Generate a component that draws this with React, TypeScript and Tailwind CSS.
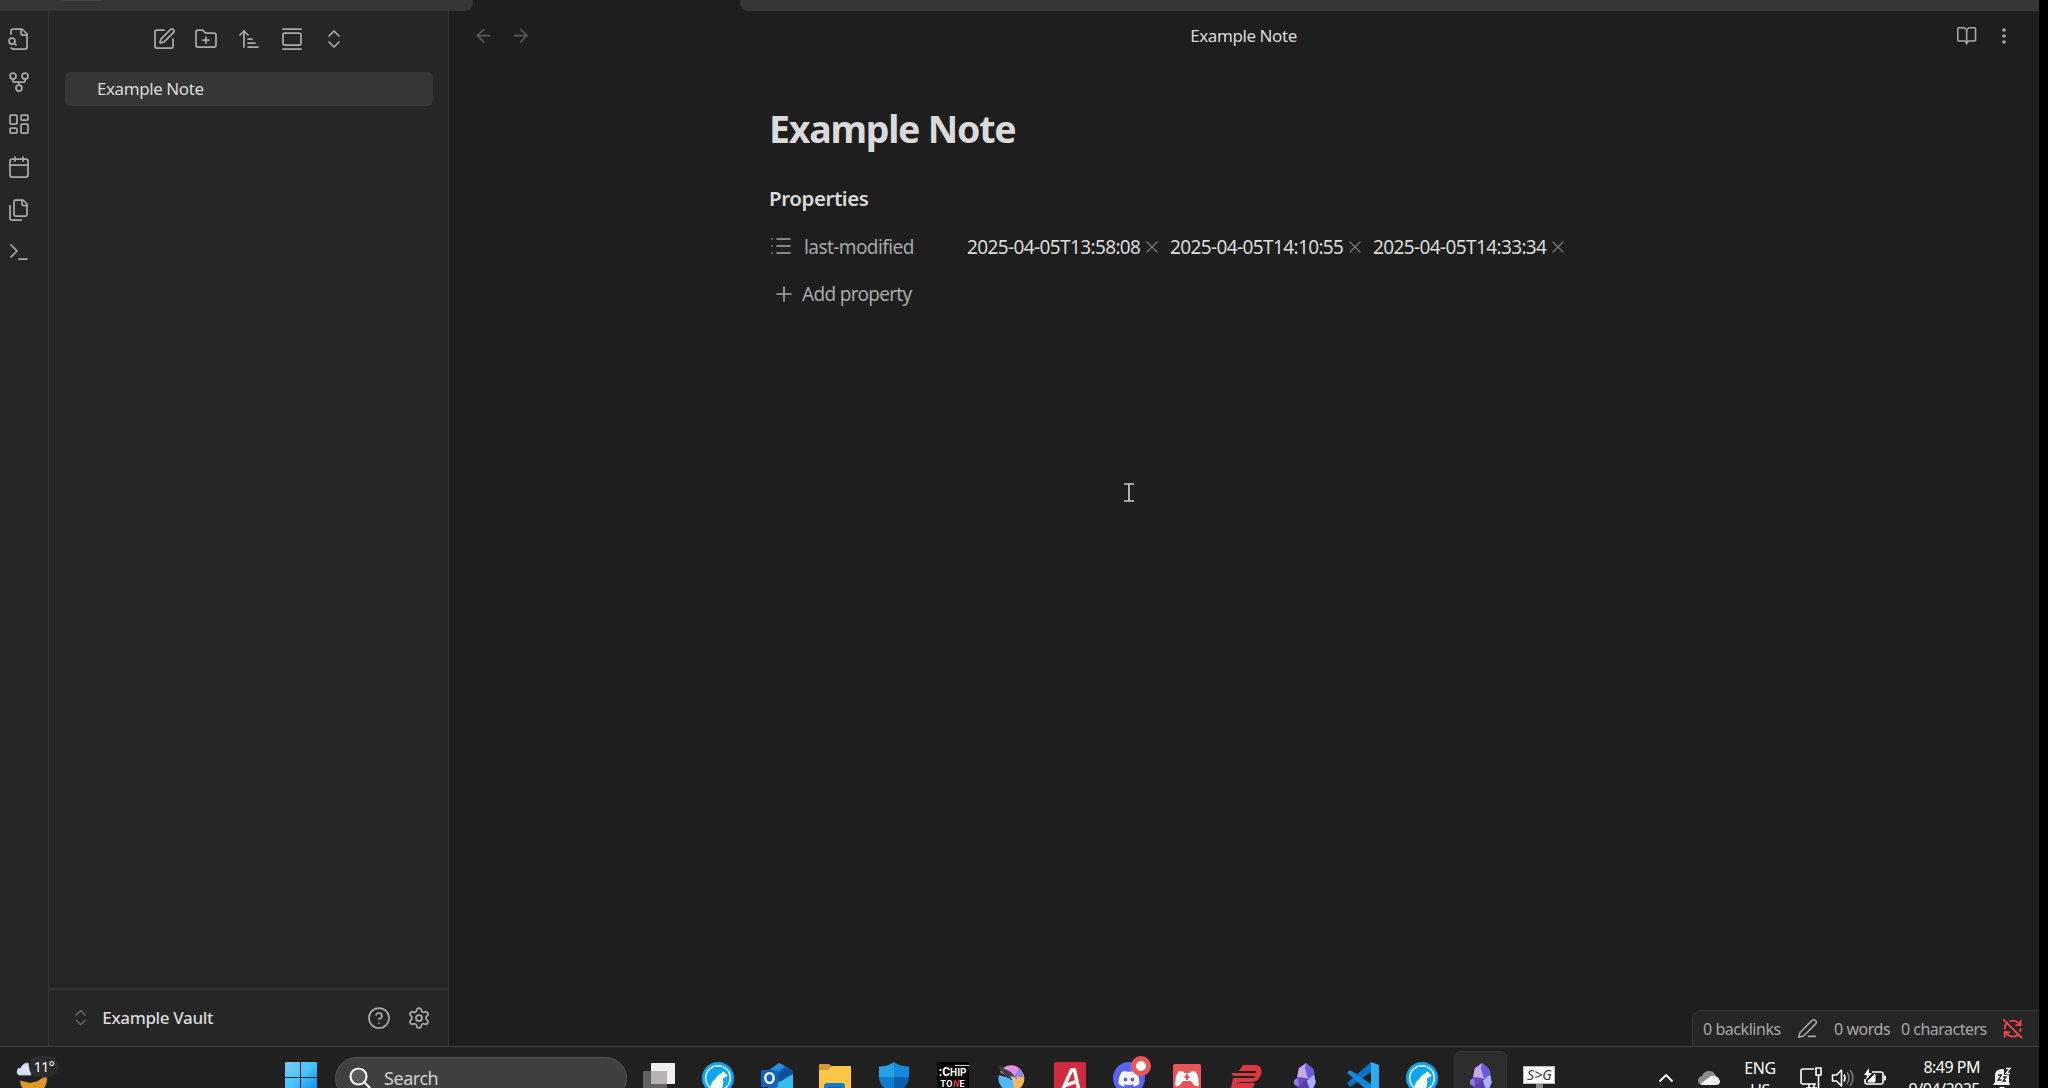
import React from "react";
import {
  ArrowLeft,
  ArrowRight,
  ArrowUpNarrowWide,
  BookOpen,
  Calendar,
  ChevronsUpDown,
  CircleHelp,
  FolderPlus,
  GalleryVertical,
  GitFork,
  LayoutDashboard,
  List,
  Plus,
  RefreshCwOff,
  Settings,
  SquarePen,
  Terminal,
  X,
} from "lucide-react";

function Stroke({ size = 24, children }: { size?: number; children: React.ReactNode }) {
  return (
    <svg width={size} height={size} viewBox="0 0 24 24" fill="none" stroke="currentColor" strokeWidth={1.75} strokeLinecap="round" strokeLinejoin="round">
      {children}
    </svg>
  );
}

function FileSearchIcon() {
  return (
    <Stroke>
      <path d="M14 2v4a2 2 0 0 0 2 2h4" />
      <path d="M4.268 21a2 2 0 0 0 1.727 1H18a2 2 0 0 0 2-2V7l-5-5H6a2 2 0 0 0-2 2v3" />
      <path d="m9 18-1.5-1.5" />
      <circle cx="5" cy="14" r="3" />
    </Stroke>
  );
}

function FilesIcon() {
  return (
    <Stroke>
      <path d="M15 2v4a1.500 1.500 0 0 0 1.500 1.500H20" />
      <path d="M8.500 18A1.500 1.500 0 0 1 7 16.500v-13A1.500 1.500 0 0 1 8.500 2H16l4 4v10.500a1.500 1.500 0 0 1-1.500 1.500Z" />
      <path d="M3 7.600v12.800A1.600 1.600 0 0 0 4.600 22h9.800" />
    </Stroke>
  );
}

function EditLineIcon() {
  return (
    <Stroke size={21}>
      <path d="M13 21h8" />
      <path d="M17 3a2.850 2.830 0 1 1 4 4L7.500 20.500 2 22l1.500-5.500Z" />
    </Stroke>
  );
}

const ribbon = [
  <FileSearchIcon />,
  <GitFork size={24} strokeWidth={1.75} />,
  <LayoutDashboard size={24} strokeWidth={1.75} />,
  <Calendar size={24} strokeWidth={1.75} />,
  <FilesIcon />,
  <Terminal size={24} strokeWidth={1.75} />,
];

function TopStrip() {
  return (
    <div className="flex h-[11px] shrink-0 justify-between bg-[#1e1e1e]">
      <div className="w-[473px] rounded-br-lg bg-[#363636]">
        <div className="ml-[63px] h-px w-[39px] bg-[#444]" />
      </div>
      <div className="w-[1299px] rounded-bl-lg bg-[#363636]" />
    </div>
  );
}

function Sidebar() {
  return (
    <aside className="flex w-[400px] shrink-0 flex-col border-r border-[#363636] bg-[#262626]">
      <div className="flex h-[61px] items-center justify-center gap-[18.7px] pb-[6px] pl-px text-[#a8a8a8]">
        <SquarePen size={24} strokeWidth={1.75} />
        <FolderPlus size={24} strokeWidth={1.75} />
        <ArrowUpNarrowWide size={24} strokeWidth={1.75} />
        <GalleryVertical size={24} strokeWidth={1.75} />
        <ChevronsUpDown size={24} strokeWidth={1.75} />
      </div>
      <div className="ml-4 flex h-[34px] w-[368px] items-center rounded-[5px] bg-[#363636] pl-8 text-[17px] tracking-[-0.42px] text-[#dadada]">
        Example Note
      </div>
      <div className="mt-auto flex h-[58px] items-center border-t-2 border-[#333] pl-[21px] pr-[17px]">
        <ChevronsUpDown size={21.3} strokeWidth={1.75} className="text-[#666]" />
        <span className="ml-[11px] text-[17px] font-medium tracking-[-0.35px] text-[#dadada]">Example Vault</span>
        <CircleHelp size={24} strokeWidth={1.75} className="ml-auto text-[#a8a8a8]" />
        <Settings size={24} strokeWidth={1.75} className="ml-4 text-[#a8a8a8]" />
      </div>
    </aside>
  );
}

const stamps = ["2025-04-05T13:58:08", "2025-04-05T14:10:55", "2025-04-05T14:33:34"];

function Note() {
  return (
    <main className="relative flex min-w-0 flex-1 flex-col bg-[#1e1e1e]">
      <header className="flex h-[49px] items-center justify-between pl-[24px] pr-[25px]">
        <div className="flex w-[120px] gap-4 text-[#5a5a5a]">
          <ArrowLeft size={21.3} strokeWidth={1.75} />
          <ArrowRight size={21.3} strokeWidth={1.75} />
        </div>
        <span className="text-[17px] tracking-[-0.42px] text-[#dadada]">Example Note</span>
        <div className="flex w-[120px] items-center justify-end gap-[17px] text-[#a8a8a8]">
          <BookOpen size={21.3} strokeWidth={1.75} />
          <svg width="20" height="22" viewBox="0 0 20 22" fill="currentColor">
            <circle cx="10" cy="5" r="1.800" />
            <circle cx="10" cy="11" r="1.800" />
            <circle cx="10" cy="17" r="1.800" />
          </svg>
        </div>
      </header>
      <section className="ml-[320px] flex flex-col items-start">
        <h1 className="mt-[43px] text-[37.500px] font-bold leading-[52px] tracking-[-1.250px] text-[#dadada]">Example Note</h1>
        <h2 className="mt-[28px] text-[20.500px] font-semibold leading-[30px] tracking-[-0.420px] text-[#dadada]">Properties</h2>
        <div className="mt-[19px] flex h-[30px] items-center">
          <List size={24} strokeWidth={1.6} className="relative -top-px text-[#a8a8a8]" />
          <span className="ml-[11px] w-[163px] text-[19px] tracking-[-0.580px] text-[#a8a8a8]">last-modified</span>
          {stamps.map((s) => (
            <span key={s} className="flex w-[203px] items-center gap-[2px] text-[19px] tracking-[-0.620px] text-[#dadada]">
              {s}
              <X size={20} strokeWidth={1.500} className="text-[#777]" />
            </span>
          ))}
        </div>
        <div className="mt-[17px] flex h-[30px] items-center gap-[6px] pl-[3px] text-[#a8a8a8]">
          <Plus size={24} strokeWidth={1.6} />
          <span className="text-[19px] tracking-[-0.700px]">Add property</span>
        </div>
      </section>
      <svg className="absolute left-[674px] top-[471px]" width="12" height="21" viewBox="0 0 12 21" fill="none" stroke="#ccc" strokeWidth="1.700">
        <path d="M1 2H11M1 19H11M6 2V19" />
      </svg>
      <footer className="mt-auto flex h-[36px] w-[347px] items-center self-end rounded-tl-[10px] border-l border-t border-[#363636] bg-[#262626] pl-[10px] text-[16px] tracking-[-0.450px] text-[#a8a8a8]">
        <span className="w-[94px]">0 backlinks</span>
        <EditLineIcon />
        <span className="ml-[16px] w-[67px]">0 words</span>
        <span className="w-[101px] tracking-[-0.520px]">0 characters</span>
        <RefreshCwOff size={21.3} strokeWidth={2} className="text-[#fb464c]" />
      </footer>
    </main>
  );
}

function WindowsIcon() {
  return (
    <svg width="32" height="32" viewBox="0 0 32 32">
      <defs>
        <linearGradient id="win" x1="0" y1="0" x2="1" y2="1">
          <stop offset="0" stopColor="#7fc4f0" />
          <stop offset=".45" stopColor="#45c8fa" />
          <stop offset="1" stopColor="#0a84e8" />
        </linearGradient>
      </defs>
      <path fill="url(#win)" d="M1 0h14v15H0V1zM16 0h15l1 1v14H16zM0 16h15v16H1l-1-1zM16 16h16v15l-1 1H16z" />
    </svg>
  );
}

function TaskViewIcon() {
  return (
    <svg width="32" height="32" viewBox="0 0 32 32">
      <rect x="8" y="1" width="24" height="21" rx="1" fill="#f0f0f2" />
      <rect x="0" y="9" width="24" height="22" rx="1" fill="#777" fillOpacity=".75" />
      <path d="M8 9H24V22H8Z" fill="#b5b4b2" />
    </svg>
  );
}

function WolfIcon() {
  return (
    <svg width="32" height="32" viewBox="0 0 32 32">
      <circle cx="16" cy="16" r="16" fill="#0ba4fb" />
      <circle cx="16" cy="16" r="12.300" fill="none" stroke="#fff" strokeWidth="1.500" />
      <path d="M8.500 26c0-4 2-7 5-9.500 1-2.500 3-4 5.500-5l2.500-2.500 1.500 2 2.500 2-1 2-3.500 1 .5 5-1.500 5.500-4 2z" fill="#fff" />
    </svg>
  );
}

function OutlookIcon() {
  return (
    <svg width="34" height="34" viewBox="0 0 34 34">
      <path d="M8 10 19 2 33 10V30H8Z" fill="#1470c4" />
      <path d="M8 10 19 2l6 3L12 15Z" fill="#1f8fe0" />
      <path d="M16 14 27 6l6 4v5L20 22Z" fill="#0f4f99" />
      <path d="M18 22 33 13V30H16Z" fill="#35bdf2" />
      <rect x="1" y="9" width="17" height="17" rx="1.500" fill="#0f62bd" />
      <ellipse cx="9.500" cy="17" rx="4.200" ry="4.900" fill="none" stroke="#fff" strokeWidth="2.400" />
    </svg>
  );
}

function FolderIcon() {
  return (
    <svg width="32" height="32" viewBox="0 0 32 32">
      <path d="M0 3q0-1 1-1h9l3 3v6H0z" fill="#d9952a" />
      <path d="M0 8h9l4-4h18q1 0 1 1v26H0z" fill="#fcc747" />
      <path d="M5 31V24q0-3 3-3h15q3 0 3 3v7z" fill="#1478c8" />
      <path d="M9 31v-6h14v6z" fill="#0d5ea8" />
    </svg>
  );
}

function ShieldIcon() {
  return (
    <svg width="32" height="32" viewBox="0 0 32 32">
      <path d="M16 0C12 3 7 4.500 1 4.500V15h15z" fill="#28a0e8" />
      <path d="M16 0c4 3 9 4.500 15 4.500V15H16z" fill="#1488da" />
      <path d="M1 15h15v17C7 28 1 23 1 15z" fill="#0f7bcf" />
      <path d="M31 15H16v17c9-4 15-9 15-17z" fill="#0a5fae" />
    </svg>
  );
}

function ChipToneIcon() {
  return (
    <div className="flex h-8 w-8 flex-col items-center bg-black font-[Roboto] font-bold text-white">
      <div className="mt-[3px] h-px w-[14px] self-end bg-[#ccc]" />
      <div className="h-[13px] whitespace-nowrap text-[10px] leading-[13px]">
        <span className="text-[12px]">:C</span>HIP
      </div>
      <div className="h-[10px] text-[9px] leading-[10px] tracking-[0.5px]">
        TO<span className="italic text-[#e23a3a]">N</span>E
      </div>
    </div>
  );
}

function KritaIcon() {
  return (
    <svg width="32" height="32" viewBox="0 0 32 32">
      <path d="M5 10A12.500 12.500 0 0 1 28 12L17 17Z" fill="#e88be8" />
      <path d="M28 11A12.500 12.500 0 0 1 19 29L16 16Z" fill="#f6b653" />
      <path d="M24 6A12.500 12.500 0 0 1 28.500 15L19 15Z" fill="#8f86e8" />
      <path d="M4 13A13 13 0 0 0 20 29L17 17Z" fill="#4fb9f5" />
      <path d="m2 3 14 7 6 7-6 1L7 10Z" fill="#3e3e42" />
      <path d="m15 14 5 1 3 5-5-1Z" fill="#bdbdc2" />
    </svg>
  );
}

function LetterAIcon() {
  return (
    <svg width="32" height="32" viewBox="0 0 32 32">
      <rect width="32" height="32" rx="2" fill="#cf2c3f" />
      <path d="M8 29 17.500 8h3L25 29M11 23.500 24 19" fill="none" stroke="#f5f5f5" strokeWidth="3.600" />
    </svg>
  );
}

function DiscordIcon() {
  return (
    <div className="relative h-8 w-8">
      <svg width="32" height="32" viewBox="0 0 32 32">
        <circle cx="16" cy="16" r="16" fill="#5865f2" />
        <path
          transform="translate(5.500 8) scale(.87)"
          fill="#fff"
          d="M20.300 2.400A20 20 0 0 0 15.400.9l-.6 1.200a18 18 0 0 0-5.500 0L8.700.9a20 20 0 0 0-4.900 1.500C.7 7.100-.2 11.600.2 16.100a20 20 0 0 0 6 3l1.300-2-2-1 .5-.4a14 14 0 0 0 12.100 0l.5.4-2 1 1.300 2a20 20 0 0 0 6-3c.5-5.200-.8-9.700-3.600-13.700zM8 13.300c-1.200 0-2.200-1.100-2.200-2.400s1-2.400 2.200-2.400 2.200 1.100 2.200 2.400-1 2.400-2.200 2.400zm8 0c-1.200 0-2.200-1.100-2.200-2.400s1-2.400 2.200-2.400 2.200 1.100 2.200 2.400-1 2.400-2.200 2.400z"
        />
      </svg>
      <span className="absolute -right-[6px] -top-[6px] h-5 w-5 rounded-full border-[5px] border-[#ee5555] bg-white" />
    </div>
  );
}

function GamepadIcon() {
  return (
    <svg width="28" height="28" viewBox="0 0 28 28">
      <rect width="28" height="28" rx="1.500" fill="#ea5459" />
      <path d="M6 7h4l1 2h6l1-2h4l3 5 1 10q-3 1-5-1l-3-4h-8l-3 4q-2 2-5 1l1-10z" fill="#fff" />
      <path d="M14 10v6M11.500 13h5" stroke="#ea5459" strokeWidth="2.200" />
    </svg>
  );
}

function VpnIcon() {
  return (
    <svg width="32" height="32" viewBox="0 0 32 32">
      <path d="M13 3H25C30 3 33 7 31 12 30 17 26 20 21 20H8l-1 6H1l2-10H23q2 0 2-2H5q-4 0-3-3H25q2 0 1-2H9Z" fill="#d93742" />
      <path d="M8 21h17q-2 6-6 8H6Z" fill="#d93742" />
    </svg>
  );
}

function CrystalIcon() {
  return (
    <svg width="32" height="32" viewBox="0 0 32 32">
      <path d="m17 1 7 6 2 9-8 1-10-2 2-9z" fill="#b9a3f0" />
      <path d="m17 1-1 5 3 11 6-4-1-6z" fill="#6a5be0" />
      <path d="m10 6 6 1 2 9-10 2z" fill="#c9a8ec" />
      <path d="m8 15 9 1 4 14-4 1L5 23z" fill="#6a4bc4" />
      <path d="m5 18 4-2 1 8-5-2z" fill="#8d7ae8" />
      <path d="m18 18 7-4 2 6-4 9-4-3z" fill="#a9b0fb" />
      <path d="m17 18 4 9 1 3-5 1-8-6z" fill="#5a3ea8" />
    </svg>
  );
}

function CodeIcon() {
  return (
    <svg width="32" height="32" viewBox="0 0 32 32">
      <path d="M0 21 24 0v10L3 25z" fill="#0a72c4" />
      <path d="M0 10.500 3 8l21 14v10z" fill="#1189dc" />
      <path d="m24 0 8 3v26l-8 3z" fill="#2aabf4" />
    </svg>
  );
}

function SignIcon() {
  return (
    <div className="flex h-[24px] w-8 flex-col items-center">
      <div className="flex h-[18px] w-8 shrink-0 items-center justify-center border border-[#bbb] bg-white font-['Open_Sans'] text-[14px] italic leading-none text-[#333]">
        S&gt;G
      </div>
      <div className="h-4 w-[7px] shrink-0 bg-[#8a8a85]" />
    </div>
  );
}

const apps: { icon: React.ReactNode; active?: boolean }[] = [
  { icon: <TaskViewIcon /> },
  { icon: <WolfIcon /> },
  { icon: <OutlookIcon /> },
  { icon: <FolderIcon /> },
  { icon: <ShieldIcon /> },
  { icon: <ChipToneIcon /> },
  { icon: <KritaIcon /> },
  { icon: <LetterAIcon /> },
  { icon: <DiscordIcon /> },
  { icon: <GamepadIcon /> },
  { icon: <VpnIcon /> },
  { icon: <CrystalIcon /> },
  { icon: <CodeIcon /> },
  { icon: <WolfIcon /> },
  { icon: <CrystalIcon />, active: true },
  { icon: <SignIcon /> },
];

function Weather() {
  return (
    <div className="relative flex h-[44px] w-[50px]">
      <svg width="50" height="44" viewBox="0 0 50 44">
        <path d="M4 24.500 14 27 22 25 27 21.500H31Q31 36 17.500 37 5 36 4 24.500z" fill="#dc9a25" />
        <path d="M1 16q0-4 4-4 2-5 7-5l3 12H3q-2-1-2-3z" fill="#dfe3f5" stroke="#a9b6ee" strokeWidth="1" />
      </svg>
      <span className="absolute left-[13px] top-0 flex h-[21px] w-[30px] items-center justify-center rounded-full bg-[#2c2c2c] text-[14px] tracking-[-0.500px] text-white">
        11°
      </span>
    </div>
  );
}

function Tray() {
  return (
    <div className="flex h-full items-center text-white">
      <svg width="16" height="10" viewBox="0 0 16 10" fill="none" stroke="#fff" strokeWidth="1.800">
        <path d="m1.500 8.500 6.500-6.500 6.500 6.500" />
      </svg>
      <svg className="ml-[23px]" width="24" height="16" viewBox="0 0 24 16">
        <path d="M1 11q0-4 4-5Q7 1 12 1q5 0 7 5l-8 8H4q-3 0-3-3z" fill="#8c8c8c" />
        <path d="M3 14 14 6q7-1 9 5 0 4-4 4H6q-2 0-3-1z" fill="#f0f0f0" />
      </svg>
      <div className="ml-[19px] w-[40px] pt-[2px] text-center text-[16px] leading-[22px] tracking-[-0.400px]">
        ENG
        <br />
        US
      </div>
      <svg className="ml-[20px]" width="22" height="22" viewBox="0 0 22 22" fill="none" stroke="#fff" strokeWidth="1.600">
        <path d="M14 2H3Q1 2 1 4v11q0 2 2 2h13M6 21h11M9 17v4M14 17v4" />
        <path d="M16 1h5v7h-5zM18.500 8v14" />
      </svg>
      <svg className="ml-[9px]" width="24" height="22" viewBox="0 0 24 22" fill="none" strokeWidth="1.600" strokeLinejoin="round">
        <path d="M1.500 8h4l5-5v16l-5-5h-4z" stroke="#fff" />
        <path d="M13 7.500q2 3.500 0 7" stroke="#fff" />
        <path d="M16 5q4 6 0 12M19 3q6 8 0 16" stroke="#777" />
      </svg>
      <svg className="ml-[8px]" width="24" height="20" viewBox="0 0 24 20">
        <path d="M9 4h9q2 0 2 2v8q0 2-2 2H4q-2 0-2-2v-3" fill="none" stroke="#fff" strokeWidth="1.600" />
        <path d="M21 8h1.500v4H21M5 13l7-7v8H5z" fill="#fff" stroke="#fff" />
        <path d="M6 0 1 7h3l-1 5 6-7H6z" fill="#fff" />
      </svg>
      <div className="ml-[12px] w-[81px] whitespace-nowrap text-right text-[16px] leading-[22px] tracking-[-0.500px]">
        8:49 PM
        <br />
        9/04/2025
      </div>
      <svg className="ml-[12px] mr-[27px]" width="20" height="22" viewBox="0 0 20 22">
        <path d="M3 15V9q0-7 7-7h2v6h5v7l1 3H1z" fill="#fff" />
        <path d="M7 20h6q-3 3-6 0z" fill="#fff" />
        <path d="M14 1.500h4l-4 5h4M6 8h0" fill="none" stroke="#fff" strokeWidth="1.400" />
        <path d="M6 8h3.500L6 13h3.500M11 10h3l-3 4h3" fill="none" stroke="#222" strokeWidth="1.300" />
      </svg>
    </div>
  );
}

function Taskbar() {
  return (
    <div className="h-[42px] shrink-0 overflow-hidden border-t border-[#444] bg-[#202020]">
      <div className="flex h-[62px] items-center">
        <div className="w-[285px] pl-4">
          <Weather />
        </div>
        <WindowsIcon />
        <div className="ml-[18px] flex h-[43px] w-[292px] shrink-0 items-center rounded-full border border-[#565656] bg-[#404040] pl-[13px]">
          <svg width="22" height="22" viewBox="0 0 22 22" fill="none" stroke="#f2f2f2" strokeWidth="2.200" strokeLinecap="round">
            <circle cx="9.500" cy="9.500" r="8" fill="#5a5a5a" />
            <path d="m15.500 15.500 5 5" />
          </svg>
          <span className="ml-[13px] text-[18px] leading-[22px] tracking-[-0.450px] text-[#d0d0d0]">Search</span>
        </div>
        <div className="ml-[3px] flex">
          {apps.map((a, i) => (
            <div key={i} className="flex w-[58.680px] justify-center">
              <div className={a.active ? "flex h-[54px] w-[53px] items-center justify-center rounded-md border border-[#353535] bg-[#2d2d2d]" : "flex h-[54px] w-[53px] items-center justify-center"}>
                {a.icon}
              </div>
            </div>
          ))}
        </div>
        <div className="ml-auto h-full">
          <Tray />
        </div>
      </div>
    </div>
  );
}

export default function App() {
  return (
    <div className="flex h-[1088px] w-[2048px] overflow-hidden bg-black font-['Noto_Sans',sans-serif]">
      <div className="flex w-[2039px] flex-col">
        <TopStrip />
        <div className="flex min-h-0 flex-1">
          <nav className="flex w-[49px] shrink-0 flex-col gap-[18.700px] border-r border-[#363636] bg-[#262626] pl-[7px] pt-[16px] text-[#a8a8a8]">
            {ribbon.map((icon, i) => (
              <div key={i} className="h-6 w-6">
                {icon}
              </div>
            ))}
          </nav>
          <Sidebar />
          <Note />
        </div>
        <Taskbar />
      </div>
    </div>
  );
}
